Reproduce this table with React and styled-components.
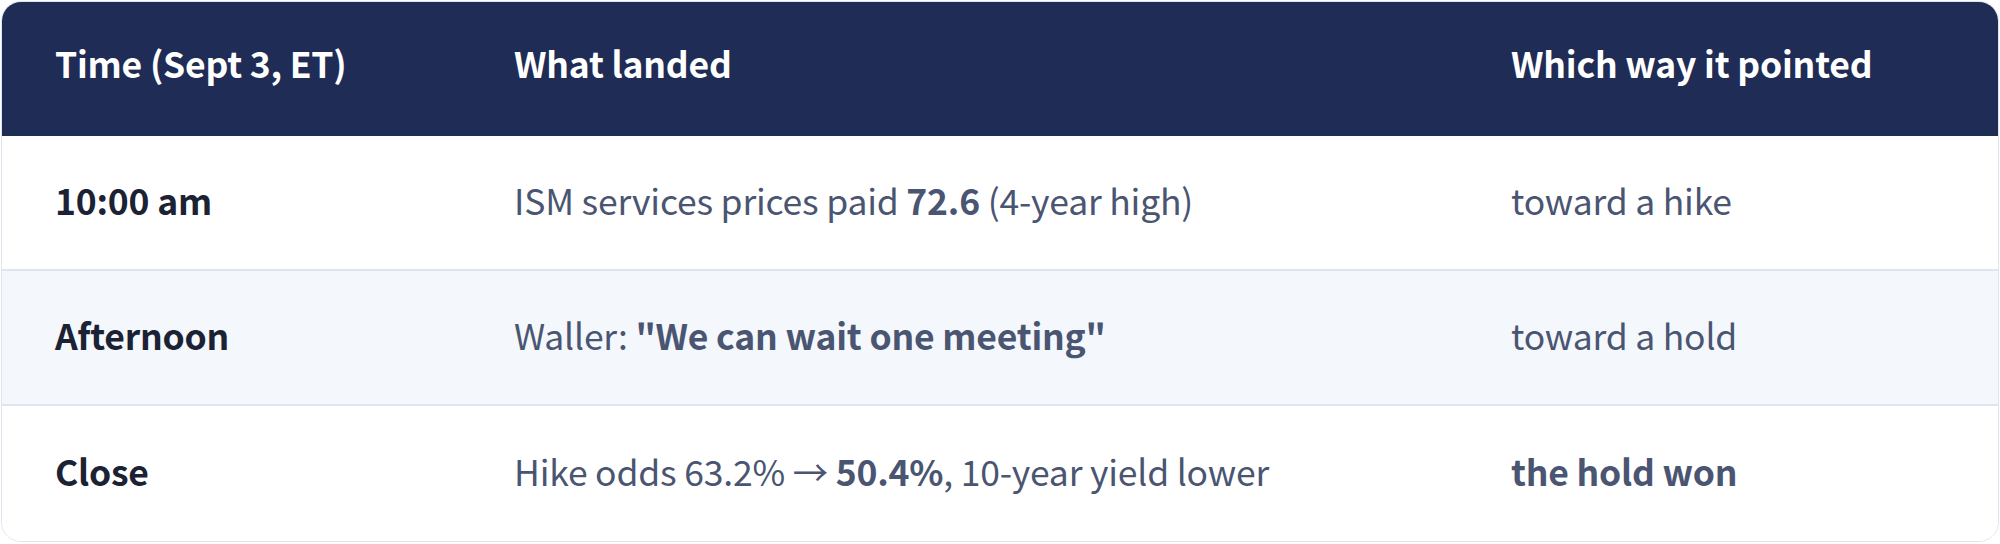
import React from "react";
import styled, { createGlobalStyle } from "styled-components";

const Global = createGlobalStyle`
  html, body { margin: 0; padding: 0; background: #ffffff; }
  body { font-family: "Noto Sans CJK KR", "Noto Sans", sans-serif; }
`;

const Page = styled.div`
  padding: 1px;
  background: #ffffff;
`;

const Card = styled.div`
  border: 1px solid #dfe5ef;
  border-radius: 20px;
  overflow: hidden;
  background: #ffffff;
`;

const Row = styled.div`
  display: grid;
  grid-template-columns: 459px 997px 1fr;
  align-items: center;
  height: ${(p) => (p.$head ? "134px" : "135px")};
  box-sizing: border-box;
  background: ${(p) => (p.$head ? "#1f2c55" : p.$alt ? "#f4f7fc" : "#ffffff")};
  border-bottom: ${(p) => (p.$last || p.$head ? "none" : "2px solid #dee5f1")};
`;

const HeadCell = styled.div`
  padding: 0 0 13px 53px;
  color: #ffffff;
  font-size: 35.5px;
  font-weight: 600;
  letter-spacing: -0.2px;
`;

const Cell = styled.div`
  padding: 0 0 6px 53px;
  font-size: 35.5px;
  color: ${(p) => (p.$first ? "#1b2233" : "#4a5572")};
  font-weight: ${(p) => (p.$first || p.$strong ? 600 : 400)};
  letter-spacing: -0.2px;
  & b { font-weight: 700; }
`;

const rows = [
  {
    time: "10:00 am",
    what: (
      <>
        ISM services prices paid <b>72.6</b> (4-year high)
      </>
    ),
    way: "toward a hike",
  },
  {
    time: "Afternoon",
    what: (
      <>
        Waller: <b>"We can wait one meeting"</b>
      </>
    ),
    way: "toward a hold",
  },
  {
    time: "Close",
    what: (
      <>
        Hike odds 63.2% → <b>50.4%</b>, 10-year yield lower
      </>
    ),
    way: "the hold won",
    strong: true,
  },
];

export default function App() {
  return (
    <Page>
      <Global />
      <Card>
        <Row $head>
          <HeadCell>Time (Sept 3, ET)</HeadCell>
          <HeadCell>What landed</HeadCell>
          <HeadCell>Which way it pointed</HeadCell>
        </Row>
        {rows.map((r, i) => (
          <Row key={i} $alt={i % 2 === 1} $last={i === rows.length - 1}>
            <Cell $first>{r.time}</Cell>
            <Cell>{r.what}</Cell>
            <Cell $strong={r.strong}>{r.way}</Cell>
          </Row>
        ))}
      </Card>
    </Page>
  );
}
